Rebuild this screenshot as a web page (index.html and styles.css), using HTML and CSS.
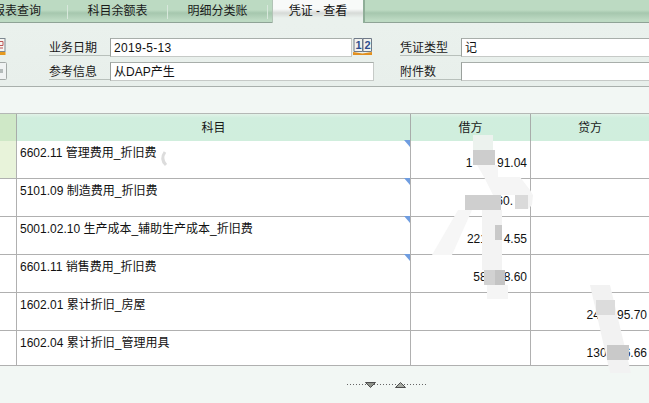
FILE: index.html
```html
<!DOCTYPE html>
<html lang="zh">
<head>
<meta charset="utf-8">
<title>凭证 - 查看</title>
<link rel="stylesheet" href="styles.css">
</head>
<body>
<div class="page">
  <div class="tabs">
    <div class="tab t1">报表查询</div>
    <div class="sep"></div>
    <div class="tab t2">科目余额表</div>
    <div class="sep"></div>
    <div class="tab t3">明细分类账</div>
    <div class="sep"></div>
    <div class="tabgap"></div>
    <div class="tab active">凭证 - 查看</div>
    <div class="tabfill"></div>
  </div>
  <div class="form">
    <div class="sideicons">
      <svg class="ic" width="6" height="18" viewBox="0 0 6 18"><rect x="-6" y="0.5" width="11" height="13" fill="#f6f6f2" stroke="#7d8790"/><path d="M0 3.500h3v4H0M0 10h3" fill="none" stroke="#b55"/><rect x="-6" y="14" width="11.500" height="3" fill="#e59a20"/></svg>
      <svg class="ic" width="7" height="18" viewBox="0 0 7 18"><rect x="-6" y="0.500" width="12.500" height="17" rx="1" fill="#f0f3f3" stroke="#a4aaa8"/><rect x="0" y="7" width="3" height="4" fill="#b4bbba"/></svg>
    </div>
    <div class="fields left">
      <div class="row"><label class="lab">业务日期</label><div class="inp date">2019-5-13</div>
        <svg class="book" width="20" height="18" viewBox="0 0 20 18">
          <path d="M1 0.500h8.500v13H1zM10 0.500h8.500v13H10z" fill="#f2f2ee" stroke="#6f7a88"/>
          <text class="bookn" x="2.500" y="11">1</text>
          <text class="bookn" x="11.500" y="11">2</text>
          <path d="M0 14l9.500 1.500L19 14v3H0z" fill="#e29020"/>
        </svg>
      </div>
      <div class="row"><label class="lab">参考信息</label><div class="inp info">从DAP产生</div></div>
    </div>
    <div class="fields right">
      <div class="row"><label class="lab">凭证类型</label><div class="inp wide">记</div></div>
      <div class="row"><label class="lab">附件数</label><div class="inp wide"></div></div>
    </div>
  </div>
  <div class="band"></div>
  <div class="grid">
    <div class="hd c0"></div><div class="hd c1">科目</div><div class="hd c2">借方</div><div class="hd c3">贷方</div>

    <div class="cell c0 sel"></div>
    <div class="cell c1 mark">6602.11 管理费用_折旧费</div>
    <div class="cell c2 num">1<i class="n1"></i>91.04</div>
    <div class="cell c3"></div>

    <div class="cell c0"></div>
    <div class="cell c1 mark">5101.09 制造费用_折旧费</div>
    <div class="cell c2 num">60.<i class="n6"></i></div>
    <div class="cell c3"></div>

    <div class="cell c0"></div>
    <div class="cell c1 mark">5001.02.10 生产成本_辅助生产成本_折旧费</div>
    <div class="cell c2 num">221<i class="n2"></i>4.55</div>
    <div class="cell c3"></div>

    <div class="cell c0"></div>
    <div class="cell c1 mark">6601.11 销售费用_折旧费</div>
    <div class="cell c2 num">58<i class="n3"></i>8.60</div>
    <div class="cell c3"></div>

    <div class="cell c0"></div>
    <div class="cell c1">1602.01 累计折旧_房屋</div>
    <div class="cell c2"></div>
    <div class="cell c3 num">24<i class="n4"></i>95.70</div>

    <div class="cell c0"></div>
    <div class="cell c1">1602.04 累计折旧_管理用具</div>
    <div class="cell c2"></div>
    <div class="cell c3 num">130<i class="n5"></i>6.66</div>
  </div>
  <div class="foot">
    <svg class="split" width="80" height="8" viewBox="0 0 80 8">
      <path d="M1 3.500h79" stroke="#666" stroke-dasharray="1 2" fill="none"/>
      <path d="M19.500 1.500h10l-5 5z" fill="#8e928a" stroke="#4c4c4c"/>
      <path d="M49.500 6.500h10l-5-5z" fill="#a6aaa2" stroke="#4c4c4c"/>
    </svg>
  </div>
  <svg class="smudge" width="649" height="403" viewBox="0 0 649 403">
    <path d="M473 135h20v15h-20z" fill="#ecf2ee"/>
    <path d="M477 165h21v12h22l10 13 3 5h-36l-4 0-9-18z" fill="#f5f5f5"/>
    <path d="M528 195h5l-1 10-4 4z" fill="#f3f3f3"/>
    <path d="M482 210h20v60h-20z" fill="#f3f3f3"/>
    <path d="M458 210h14l-20 45h-20z" fill="#f6f6f6"/>
    <path d="M487 285h21v14h-21z" fill="#f5f5f5"/>
    <path d="M590 285h20l21 88h-21z" fill="#f2f2f2"/>
    <path d="M473 150h22v15h-22z" fill="#cdcdcd"/>
    <path d="M465 195h36v15h-36z" fill="#cfcfcf"/>
    <path d="M515 195h13v14h-13z" fill="#dadada"/>
    <path d="M495 225h7v15h-7z" fill="#c9c9c9"/>
    <path d="M484 270h11v15h-11z" fill="#d2d2d2"/>
    <path d="M495 270h10v15h-10z" fill="#c4c4c4"/>
    <path d="M596 300h19v15h-19z" fill="#dcdcdc"/>
    <path d="M607 345h22v15h-22z" fill="#c9c9c9"/>
    <path d="M165 152q-5 7 1 13" fill="none" stroke="#dcdcdc" stroke-width="3"/>
  </svg>
</div>
</body>
</html>
```
FILE: styles.css
```css
* { box-sizing: border-box; }
html, body { margin: 0; padding: 0; }
body {
  width: 649px; height: 403px; overflow: hidden;
  background: #f2f7f4;
  font-family: "Liberation Sans", "Noto Sans CJK SC", sans-serif;
  font-size: 12px; color: #111;
}
.page { position: relative; width: 649px; height: 403px; overflow: hidden; }
.tabs {
  display: flex; height: 23px;
  background: linear-gradient(#bcdac2, #bcdac2 10px, #a6c7ae 13px, #bddac3 20px);
  border-bottom: 1px solid #8fa396;
}
.tab { height: 22px; line-height: 22px; text-align: center; color: #1a1a1a; flex: none; white-space: nowrap; }
.sep { width: 1px; height: 14px; margin-top: 5px; background: #d8e8dc; flex: none; }
.t1 { width: 67px; display: flex; justify-content: flex-end; padding-right: 26px; }
.t2, .t3 { width: 99px; }
.tabgap { width: 5px; flex: none; }
.active {
  width: 90px; height: 23px;
  background: linear-gradient(#f8faf9, #f8faf9 9px, #d6dad7 13px, #eaf1ed 18px);
  color: #111;
  box-shadow: 2px 0 0 #8fae98, -1px 0 0 #b2c4b6;
}
.tabfill { flex: 1; }
.form {
  display: flex; height: 64px; padding-top: 15px;
  background: linear-gradient(#eaf1ed, #e8efeb);
  border-bottom: 1px solid #a9b0ac;
}
.sideicons { width: 49px; flex: none; display: flex; flex-direction: column; gap: 6px; }
.ic { display: block; }
.fields { display: flex; flex-direction: column; flex: none; }
.left { width: 351px; }
.right { width: 260px; }
.row { display: flex; height: 24px; align-items: flex-start; }
.lab {
  width: 61px; height: 18px; line-height: 20px; color: #1a1a1a; flex: none;
  border-bottom: 1px solid #b8c0bb;
}
.inp {
  height: 19px; line-height: 18px; background: #fff; padding-left: 3px;
  border: 1px solid #c6cac7; border-left-color: #9aa09c; border-top-color: #a8aeaa;
  flex: none;
}
.date { width: 242px; letter-spacing: 0.3px; }
.info { width: 264px; }
.book { margin-left: 1px; flex: none; }
.bookn { font-size: 11px; font-weight: bold; fill: #2f4f8f; font-family: "Liberation Sans", sans-serif; }
.wide { width: 260px; }
.band { height: 27px; background: #f2f7f4; border-bottom: 1px solid #b4b8b5; }
.grid {
  display: grid;
  grid-template-columns: 16px 394px 120px 119px;
  grid-template-rows: 27px 38px 38px 38px 38px 38px 35px;
}
.hd {
  background: linear-gradient(#e2f2e8, #d0eede 4px, #d0eedd);
  border-left: 1px solid #a8acaa;
  text-align: center; line-height: 28px; color: #1a1a1a;
}
.hd.c0 { background: #cfe8c7; border-left: 0; }
.cell {
  background: #fff; border-left: 1px solid #b0b0b0; border-bottom: 1px solid #b0b0b0;
  position: relative; padding: 4px 0 0 3px; line-height: 17px;
}
.cell.c0 { border-left: 0; }
.cell.sel { background: #e8f3da; }
.cell.num {
  display: flex; justify-content: flex-end; align-items: flex-start;
  padding: 14px 3px 0 0;
}
.cell.c3.num { padding-right: 2px; }
.num i { display: block; flex: none; height: 14px; }
.n1 { width: 24.6px; } .n2 { width: 16.7px; } .n3 { width: 17px; }
.n4 { width: 17px; } .n5 { width: 17px; } .n6 { width: 14px; }
.mark::after {
  content: ""; position: absolute; right: 0; top: -1px;
  border-top: 7px solid #6f9de0; border-left: 6px solid transparent;
}
.foot { height: 37px; padding: 15px 0 0 346px; background: #f2f7f4; }
.split { display: block; }
.smudge { position: absolute; left: 0; top: 0; pointer-events: none; }
```
